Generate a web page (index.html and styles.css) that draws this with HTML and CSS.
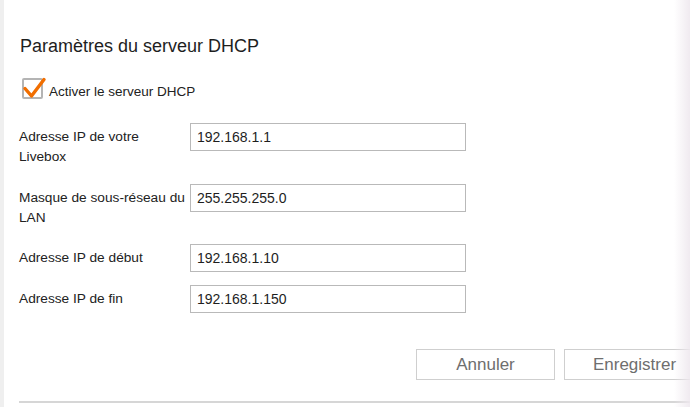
FILE: index.html
```html
<!DOCTYPE html>
<html lang="fr">
<head>
<meta charset="utf-8">
<title>Paramètres du serveur DHCP</title>
<link rel="stylesheet" href="styles.css">
</head>
<body>
<div class="page">
  <div class="strip"></div>
  <main class="panel">
    <h1 class="title">Paramètres du serveur DHCP</h1>
    <label class="check-row">
      <span class="check-box">
        <svg class="check-mark" width="26" height="26" viewBox="0 0 26 26" aria-hidden="true">
          <path d="M3 11.5 L9.5 19 L22 2.5" fill="none" stroke="#f16e00" stroke-width="3.4" stroke-linecap="round" stroke-linejoin="round"/>
        </svg>
      </span>
      <span class="check-text">Activer le serveur DHCP</span>
    </label>
    <div class="form">
      <div class="row">
        <div class="label two">Adresse IP de votre<br>Livebox</div>
        <div class="input">192.168.1.1</div>
      </div>
      <div class="row">
        <div class="label two tight">Masque de sous-réseau du<br>LAN</div>
        <div class="input">255.255.255.0</div>
      </div>
      <div class="row">
        <div class="label">Adresse IP de début</div>
        <div class="input">192.168.1.10</div>
      </div>
      <div class="row">
        <div class="label">Adresse IP de fin</div>
        <div class="input">192.168.1.150</div>
      </div>
    </div>
    <div class="actions">
      <button class="btn btn-cancel">Annuler</button>
      <button class="btn btn-save">Enregistrer</button>
    </div>
    <div class="rule"></div>
  </main>
  <div class="edge-shade"></div>
</div>
</body>
</html>
```
FILE: styles.css
```css
html, body {
  margin: 0;
  padding: 0;
  background: #ffffff;
  overflow: hidden;
}
body {
  font-family: "Liberation Sans", Arial, Helvetica, sans-serif;
  color: #222222;
}
.page {
  position: relative;
  display: flex;
  width: 710px;
  height: 407px;
}
.strip {
  width: 4px;
  flex: none;
  background: #efefef;
}
.panel {
  flex: 1;
  padding-left: 15px;
  display: flex;
  flex-direction: column;
}
.title {
  margin: 34px 0 0 1px;
  font-size: 18px;
  line-height: 24px;
  font-weight: normal;
  color: #1e1e1e;
}
.check-row {
  margin-top: 20px;
  display: flex;
  align-items: flex-start;
}
.check-box {
  position: relative;
  margin-left: 3px;
  width: 17px;
  height: 17px;
  border: 2px solid #b4b4b4;
  border-radius: 2px;
  background: #fff;
  flex: none;
}
.check-mark {
  position: absolute;
  left: -2px;
  top: -3px;
}
.check-text {
  margin-left: 6px;
  margin-top: 6px;
  font-size: 13.5px;
  line-height: 16px;
}
.form {
  margin-top: 23px;
  display: flex;
  flex-direction: column;
  gap: 13px;
}
.row {
  display: flex;
  align-items: flex-start;
}
.label {
  width: 171px;
  flex: none;
  font-size: 13.7px;
  line-height: 20px;
  padding-top: 4px;
  color: #222;
  white-space: nowrap;
}
.label.two {
  padding-bottom: 4px;
}
.label.two.tight {
  padding-bottom: 3px;
}
.input {
  box-sizing: border-box;
  width: 276px;
  height: 28px;
  border: 1px solid #b9b9b9;
  padding-left: 6px;
  font-size: 14px;
  line-height: 26px;
  color: #1e1e1e;
}
.actions {
  margin-top: 36px;
  display: flex;
  gap: 9px;
  padding-left: 397px;
}
.btn {
  box-sizing: border-box;
  height: 31px;
  border: 1px solid #cfcfcf;
  background: #ffffff;
  font-family: "Liberation Sans", Arial, Helvetica, sans-serif;
  font-size: 17px;
  color: #6e6e6e;
  padding: 0;
}
.btn-cancel { width: 139px; }
.btn-save { width: 141px; }
.rule {
  margin-top: 21px;
  height: 2px;
  background: #d6d6d6;
}
.edge-shade {
  position: absolute;
  left: 674px;
  top: 0;
  width: 16px;
  height: 407px;
  background: linear-gradient(to right, rgba(245, 240, 245, 0), rgba(238, 232, 238, 0.9));
  pointer-events: none;
}
```
